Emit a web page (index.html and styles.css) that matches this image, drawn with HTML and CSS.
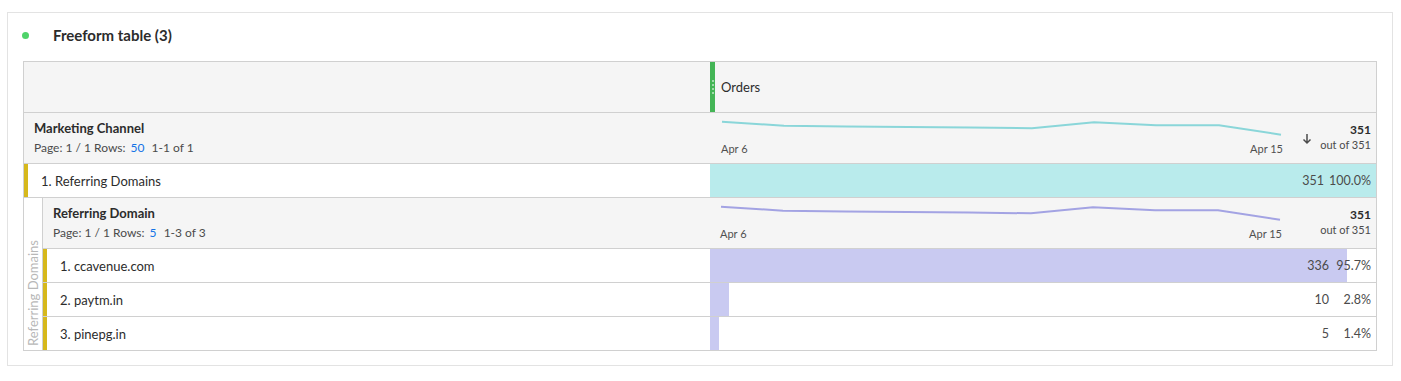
FILE: index.html
```html
<!DOCTYPE html>
<html lang="en">
<head>
  <meta charset="UTF-8">
  <meta name="viewport" content="width=device-width, initial-scale=1.0">
  <title>Freeform table</title>
  <link rel="stylesheet" href="styles.css">
</head>
<body>
  <div class="panel">
    <div class="panel-title">
      <span class="status-dot"></span>
      <span class="title-text">Freeform table (3)</span>
    </div>

    <div class="ff-table">
      <!-- column header -->
      <div class="row head-row">
        <div class="cell-left"></div>
        <div class="cell-right metric-head">
          <div class="grip"><i></i><i></i><i></i><i></i></div>
          <span>Orders</span>
        </div>
      </div>

      <!-- dimension header -->
      <div class="row dim-row">
        <div class="cell-left dim-info">
          <div class="dim-name">Marketing Channel</div>
          <div class="dim-page">Page: 1 / 1 Rows: <a class="rows-link">50</a> 1-1 of 1</div>
        </div>
        <div class="cell-right summary">
          <div class="trend">
            <svg class="spark" width="562" height="20" viewBox="0 0 562 20">
              <polyline points="1,3.7 63,7.7 125,8.5 187,9 249,9.5 311,10.3 373,4.3 435,7.3 498,7.3 560,16.7" fill="none" stroke="#8ad6d9" stroke-width="2"/>
            </svg>
            <div class="dates"><span>Apr 6</span><span>Apr 15</span></div>
          </div>
          <svg class="sort" width="10" height="12" viewBox="0 0 10 12">
            <path d="M5 1v9M1.5 6.5 5 10l3.5-3.5" fill="none" stroke="#4b4b4b" stroke-width="1.5"/>
          </svg>
          <div class="total">
            <div class="total-num">351</div>
            <div class="total-of">out of 351</div>
          </div>
        </div>
      </div>

      <!-- data row -->
      <div class="row data-row">
        <div class="cell-left item">1. Referring Domains</div>
        <div class="cell-right value-cell">
          <div class="bar teal" style="width: 100%"></div>
          <span class="val">351</span><span class="pct">100.0%</span>
        </div>
      </div>

      <!-- breakdown -->
      <div class="breakdown">
        <div class="side-label"><span>Referring Domains</span></div>
        <div class="sub-table">
          <div class="row dim-row">
            <div class="cell-left dim-info sub">
              <div class="dim-name">Referring Domain</div>
              <div class="dim-page">Page: 1 / 1 Rows: <a class="rows-link">5</a> 1-3 of 3</div>
            </div>
            <div class="cell-right summary">
              <div class="trend">
                <svg class="spark" width="562" height="20" viewBox="0 0 562 20">
                  <polyline points="1,3.7 63,7.7 125,8.5 187,9 249,9.5 311,10.3 373,4.3 435,7.3 498,7.3 560,16.7" fill="none" stroke="#a3a3e3" stroke-width="2"/>
                </svg>
                <div class="dates"><span>Apr 6</span><span>Apr 15</span></div>
              </div>
              <span class="sort-space"></span>
              <div class="total">
                <div class="total-num">351</div>
                <div class="total-of">out of 351</div>
              </div>
            </div>
          </div>

          <div class="row data-row">
            <div class="cell-left item sub">1. ccavenue.com</div>
            <div class="cell-right value-cell">
              <div class="bar lilac" style="width: 95.7%"></div>
              <span class="val">336</span><span class="pct">95.7%</span>
            </div>
          </div>
          <div class="row data-row">
            <div class="cell-left item sub">2. paytm.in</div>
            <div class="cell-right value-cell">
              <div class="bar lilac" style="width: 2.8%"></div>
              <span class="val">10</span><span class="pct">2.8%</span>
            </div>
          </div>
          <div class="row data-row last">
            <div class="cell-left item sub">3. pinepg.in</div>
            <div class="cell-right value-cell">
              <div class="bar lilac" style="width: 1.4%"></div>
              <span class="val">5</span><span class="pct">1.4%</span>
            </div>
          </div>
        </div>
      </div>
    </div>
  </div>
</body>
</html>
```

FILE: styles.css
```css
body {
  margin: 0;
  padding: 12px 0 0 7px;
  background: #fff;
  color: #2c2c2c;
  font-family: Lato, "Noto Sans", sans-serif;
  font-size: 13px;
}

.panel {
  width: 1384px;
  height: 352px;
  border: 1px solid #e3e3e3;
}

.panel-title {
  display: flex;
  align-items: center;
  height: 44px;
  padding-left: 14px;
}

.status-dot {
  width: 7px;
  height: 7px;
  border-radius: 50%;
  background: #4fd36a;
}

.title-text {
  margin-left: 24px;
  font-weight: 700;
  font-size: 15px;
  color: #2c2c2c;
}

.ff-table {
  margin: 4px 15px 0 15px;
  border: 1px solid #d0d0d0;
  border-bottom: 0;
}

.row {
  display: flex;
  border-bottom: 1px solid #d0d0d0;
}

.cell-left {
  width: 686px;
  flex: none;
}

.cell-right {
  flex: 1;
  position: relative;
}

.head-row {
  height: 50px;
  background: #f5f5f5;
}

.metric-head {
  display: flex;
  align-items: center;
}

.grip {
  align-self: stretch;
  width: 5px;
  background: #44b556;
  display: flex;
  flex-direction: column;
  justify-content: center;
  align-items: center;
  gap: 2px;
}

.grip i {
  width: 2px;
  height: 2px;
  border-radius: 50%;
  background: #bfe9c6;
}

.metric-head span {
  margin-left: 6px;
  font-size: 13px;
  color: #2c2c2c;
}

.dim-row {
  height: 50px;
  background: #f5f5f5;
}

.dim-info {
  padding: 7px 0 0 10px;
  box-sizing: border-box;
}

.dim-info.sub {
  width: 666px;
}

.dim-name {
  font-weight: 700;
  font-size: 13px;
  line-height: 17px;
}

.dim-page {
  margin-top: 3px;
  font-size: 12px;
  line-height: 16px;
  color: #4b4b4b;
}

.rows-link {
  color: #1473e6;
  margin: 0 4px 0 2px;
}

.summary {
  display: flex;
  align-items: flex-start;
  padding: 5px 5px 0 11px;
}

.trend {
  width: 562px;
  flex: none;
}

.spark {
  display: block;
}

.dates {
  display: flex;
  justify-content: space-between;
  margin-top: 4px;
  font-size: 11px;
  line-height: 13px;
  color: #505050;
}

.sort {
  margin: 15px 0 0 19px;
  flex: none;
}

.sort-space {
  width: 29px;
  flex: none;
}

.total {
  flex: 1;
  text-align: right;
  padding-top: 4px;
  font-size: 11px;
  line-height: 15px;
}

.total-num {
  font-weight: 700;
  font-size: 12px;
}

.total-of {
  color: #4b4b4b;
}

.data-row {
  height: 33px;
}

.item {
  display: flex;
  align-items: center;
  border-left: 4px solid #d6b81c;
  padding-left: 13px;
  box-sizing: border-box;
  font-size: 13px;
}

.item.sub {
  width: 667px;
  padding-left: 13px;
}

.value-cell {
  display: flex;
  align-items: center;
  justify-content: flex-end;
  padding-right: 5px;
  color: #4b4b4b;
  font-size: 12.5px;
}

.bar {
  position: absolute;
  left: 0;
  top: 0;
  bottom: 0;
}

.bar.teal {
  background: #b9ebec;
}

.bar.lilac {
  background: #c9caf1;
}

.val,
.pct {
  position: relative;
}

.pct {
  min-width: 37px;
  margin-left: 5px;
  text-align: right;
}

.breakdown {
  display: flex;
}

.side-label {
  width: 19px;
  flex: none;
  border-right: 1px solid #d0d0d0;
  border-bottom: 1px solid #d0d0d0;
  display: flex;
  align-items: flex-end;
  justify-content: center;
  padding-bottom: 4px;
  box-sizing: border-box;
}

.side-label span {
  writing-mode: vertical-rl;
  transform: rotate(180deg);
  color: #b8b8b8;
  font-size: 13px;
  white-space: nowrap;
}

.sub-table {
  flex: 1;
}
```
